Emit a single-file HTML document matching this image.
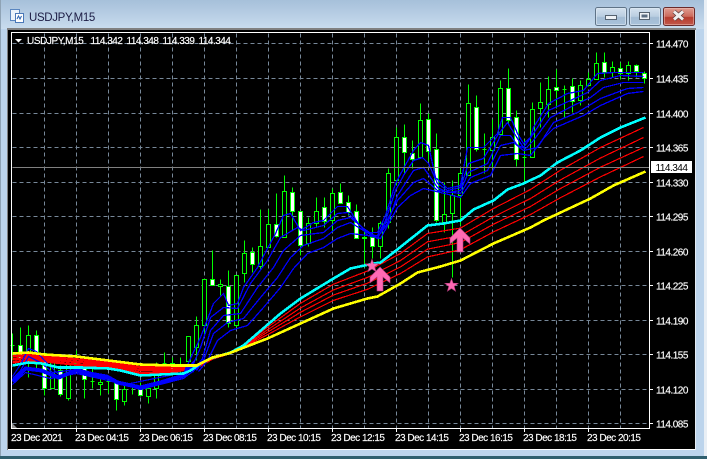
<!DOCTYPE html>
<html><head><meta charset="utf-8"><title>USDJPY,M15</title>
<style>
html,body{margin:0;padding:0;width:707px;height:459px;overflow:hidden;background:#fff}
svg{display:block}
text{font-family:"Liberation Sans",sans-serif;font-size:10px;fill:#fff;letter-spacing:-.5px;stroke:#fff;stroke-width:.15px}
</style></head><body>
<svg width="707" height="459" viewBox="0 0 707 459" xmlns="http://www.w3.org/2000/svg">
<defs>
<linearGradient id="t" x1="0" y1="0" x2="0" y2="1"><stop offset="0" stop-color="#a6c0da"/><stop offset="1" stop-color="#c9dcee"/></linearGradient>
<linearGradient id="b" x1="0" y1="0" x2="0" y2="1"><stop offset="0" stop-color="#d6e3f0"/><stop offset=".5" stop-color="#b9cde0"/><stop offset=".55" stop-color="#a3bcd4"/><stop offset="1" stop-color="#a9c2da"/></linearGradient>
<linearGradient id="c" x1="0" y1="0" x2="0" y2="1"><stop offset="0" stop-color="#e0a094"/><stop offset=".5" stop-color="#cc6a5c"/><stop offset=".55" stop-color="#b63c2e"/><stop offset="1" stop-color="#c25a4c"/></linearGradient>
</defs>
<rect width="707" height="459" fill="#bcd4ec"/>
<rect width="707" height="29" fill="url(#t)"/>
<rect x="0" y="0" width="1" height="459" fill="#8fa3b5"/>
<rect x="704" y="0" width="3" height="459" fill="#e9eff5"/>
<rect x="0" y="456" width="707" height="3" fill="#2f5f6e"/>

<!-- title icon -->
<rect x="10.5" y="9.5" width="9" height="11" fill="#eaf2fb" stroke="#5a86c0"/>
<rect x="15.5" y="13.5" width="8" height="9" fill="#fff" stroke="#4a78b8"/>
<path d="M17 19l1.5-3 1.5 3 1.5-3" fill="none" stroke="#2a62b0"/>
<text x="29" y="21" style="font-size:11.5px;letter-spacing:-.35px;fill:#1c1c44;stroke:none">USDJPY,M15</text>

<!-- buttons -->
<rect x="595.5" y="7.5" width="31" height="18" rx="2" fill="url(#b)" stroke="#5f7387"/>
<rect x="596.5" y="8.5" width="29" height="16" rx="1" fill="none" stroke="#dfe9f3" stroke-opacity=".6"/>
<rect x="605.5" y="15.5" width="11" height="4" fill="#eef2f6" stroke="#55626f"/>
<rect x="629.5" y="7.5" width="31" height="18" rx="2" fill="url(#b)" stroke="#5f7387"/>
<rect x="630.5" y="8.5" width="29" height="16" rx="1" fill="none" stroke="#dfe9f3" stroke-opacity=".6"/>
<rect x="639.5" y="12.5" width="10" height="7" fill="#eef2f6" stroke="#55626f"/>
<rect x="641.5" y="14.5" width="6" height="3" fill="#5a6c80"/>
<rect x="663.5" y="7.5" width="31" height="18" rx="2" fill="url(#c)" stroke="#6a2a2a"/>
<rect x="664.5" y="8.5" width="29" height="16" rx="1" fill="none" stroke="#efc4bc" stroke-opacity=".5"/>
<path d="M674 11.5l9 8M683 11.5l-9 8" fill="none" stroke="#5a3a3a" stroke-width="4.4"/>
<path d="M674 11.5l9 8M683 11.5l-9 8" fill="none" stroke="#f0eeee" stroke-width="3"/>

<!-- chart frame -->
<rect x="7" y="28" width="689" height="2" fill="#808080"/>
<rect x="7" y="28" width="1" height="422" fill="#808080"/>
<rect x="8" y="30" width="688" height="419" fill="#000"/>
<rect x="8" y="449" width="688" height="1" fill="#fff"/>
<rect x="695" y="30" width="1" height="420" fill="#e4ecf4"/>

<g transform="translate(.5,.5)" shape-rendering="crispEdges" fill="none">
<!-- grid -->
<path stroke="#778899" stroke-dasharray="4 3" d="M44 33V428M76 33V428M108 33V428M140 33V428M172 33V428M204 33V428M236 33V428M268 33V428M300 33V428M332 33V428M364 33V428M396 33V428M428 33V428M460 33V428M492 33V428M524 33V428M556 33V428M588 33V428M620 33V428M12 43H648M12 78H648M12 113H648M12 147H648M12 182H648M12 216H648M12 251H648M12 285H648M12 320H648M12 354H648M12 389H648M12 423H648"/>
<!-- wicks -->
<path stroke="#00ff00" d="M12 333V360M20 327V365M28 325V377M36 330V368M44 352V395M52 358V388M60 365V396M68 363V400M76 350V372M84 360V398M92 367V388M100 375V395M108 377V393M116 380V410M124 383V405M132 386V394M140 382V396M148 385V403M156 362V398M164 352V370M172 357V373M180 357V372M188 336V362M196 316V360M204 279V335M212 250V285M220 279V295M228 270V327M236 275V327M244 240V282M252 247V272M260 209V270M268 209V247M276 193V237M284 175V237M292 187V230M300 211V255M308 217V246M316 197V227M324 197V227M332 188V232M340 183V203M348 195V215M356 204V238M364 230V267M372 227V258M380 221V258M388 168V228M396 127V185M404 124V173M412 140V168M420 103V157M428 113V161M436 133V222M444 182V232M452 180V277M460 168V225M468 84V175M476 95V151M484 133V173M492 119V168M500 80V134M508 68V123M516 110V166M524 139V183M532 102V157M540 82V127M548 76V117M556 69V108M564 85V117M572 78V112M580 80V105M588 72V86M596 52V79M604 52V77M612 61V77M620 62V79M628 61V80M636 64V77M644 71V83"/>
<!-- bull bodies -->
<path stroke="#00ff00" fill="#000" d="M10 345h4M26 335h4v22h-4zM50 358h4v30h-4zM66 363h4v35h-4zM74 363h4v1h-4zM90 381h4M98 382h4v2h-4zM106 381h4M122 389h4v12h-4zM130 386h4M146 388h4v8h-4zM154 370h4v18h-4zM162 363h4M178 365h4M186 336h4v25h-4zM194 325h4v22h-4zM202 279h4v46h-4zM218 284h4v2h-4zM234 275h4v50h-4zM242 253h4v20h-4zM258 246h4v20h-4zM266 224h4v23h-4zM282 191h4v46h-4zM306 223h4v20h-4zM314 211h4v12h-4zM330 193h4v27h-4zM362 237h4v1h-4zM378 223h4v23h-4zM386 173h4v49h-4zM394 137h4v43h-4zM418 120h4v37h-4zM442 214h4v8h-4zM450 195h4v18h-4zM458 173h4v22h-4zM466 103h4v72h-4zM482 149h4M490 137h4v13h-4zM498 88h4v46h-4zM522 157h4M530 109h4v48h-4zM538 102h4v6h-4zM546 89h4v15h-4zM562 89h4M578 85h4v15h-4zM586 79h4v6h-4zM594 63h4v16h-4zM610 67h4v5h-4zM626 65h4v8h-4z"/>
<!-- bear bodies -->
<path stroke="#00ff00" fill="#fff" d="M18 345h4v13h-4zM34 335h4v19h-4zM42 353h4v35h-4zM58 370h4v24h-4zM82 367h4v12h-4zM114 382h4v17h-4zM138 387h4v8h-4zM170 363h4v7h-4zM210 279h4v6h-4zM226 286h4v37h-4zM250 252h4v12h-4zM274 224h4v12h-4zM290 192h4v19h-4zM298 211h4v34h-4zM322 207h4v14h-4zM338 192h4v11h-4zM346 202h4v10h-4zM354 211h4v27h-4zM370 237h4v9h-4zM402 137h4v15h-4zM410 153h4v6h-4zM426 119h4v32h-4zM434 149h4v71h-4zM474 107h4v42h-4zM506 88h4v32h-4zM514 117h4v42h-4zM554 87h4v3h-4zM570 86h4v15h-4zM602 62h4v10h-4zM618 68h4v5h-4zM634 65h4v6h-4zM642 73h4v5h-4z"/>
<!-- red lines left -->
<g stroke="#ff0000" stroke-width="2.5">
<polyline points="12,356 28,354.5 44,356.3 76,358.8 108,362 140,366.8 172,366.5 196,365 212,358 228,353"/>
<polyline points="12,359 28,357 44,358.5 76,361.5 108,364 140,369.5 172,369 196,366 212,358 228,353"/>
<polyline points="12,362 28,359.5 44,360.8 76,364.3 108,366 140,372.3 172,371.5 196,367 212,358 228,353"/>
</g>
<!-- red lines right -->
<g stroke="#ff0000" stroke-width="1.2">
<polyline points="228,353 243,345.4 267,326.7 300,302.8 333,283.7 367,270.5 400,253 427,233 460,227.6 493,208 530,189 560,169.7 600,147 643,127"/>
<polyline points="228,353 243,345.8 267,329.3 300,307.5 333,289.4 367,276.9 400,260 427,241.3 460,235.2 493,216.3 530,198 560,179.4 600,157.5 643,137"/>
<polyline points="228,353 243,346.1 267,331.7 300,311.8 333,294.5 367,282.7 400,266.4 427,248.7 460,242 493,223.7 530,206 560,188 600,166.7 643,147"/>
<polyline points="228,353 243,346.5 267,334.2 300,316.3 333,299.9 367,288.8 400,273 427,256.4 460,249.2 493,231.4 530,214 560,197.2 600,176.4 643,156"/>
</g>
<!-- blue -->
<g stroke="#0000ff">
<polyline stroke-width="1.2" points="12,376 20,364 28,348 36,351 44,360 52,368 60,376 76,368 91,372 108,375"/>
<polyline stroke-width="1.2" points="12,378 20,370 28,356 40,362 52,372 76,369 100,375 125,384 183,372 196,358"/>
<polyline stroke-width="1.2" points="12,384 25,372 50,378 76,373 108,380 140,389 183,378 196,368 204,358"/>
<polyline stroke-width="4" points="12,381 25,368 41,370 58,377 76,370 91,375 108,377 117,382 140,387 160,382 183,375 192,366"/>
<polyline stroke-width="1.3" points="183,373 190,358 200,337 213,303 223,293 228,305 237,303 243,287 257,267 267,248 275,233 283,215 290,213 300,230 313,222 323,220 337,206 347,206 357,222 367,232 377,232 385,215 395,183 403,168 413,150 420,142 428,145 435,177 447,188 460,185 467,147 483,147 497,133 502,117 510,117 517,133 523,143 530,137 533,127 548,103 567,93 583,90 597,73 613,72 643,72"/>
<polyline stroke-width="1.3" points="190,370 200,347 210,317 223,307 237,308 250,283 267,260 280,237 297,227 303,230 323,225 337,213 347,212 360,225 367,235 377,235 385,220 395,190 403,175 413,160 422,157 428,163 437,183 447,190 460,187 468,163 483,158 497,135 507,122 510,127 517,138 523,147 533,133 548,110 570,100 587,92 600,80 620,75 643,76"/>
<polyline stroke-width="1.3" points="192,372 202,358 210,330 223,315 240,313 257,287 273,267 283,250 300,235 323,232 337,220 350,217 363,228 377,237 387,223 397,195 413,170 423,167 437,187 447,192 460,190 468,172 487,163 500,135 510,135 517,145 525,148 533,140 550,117 573,105 590,97 603,87 623,82 643,82"/>
<polyline stroke-width="1.3" points="196,370 203,360 213,333 227,322 243,318 260,297 277,277 290,257 303,245 323,238 337,227 350,222 363,230 377,238 397,200 413,182 423,178 437,190 460,193 470,177 487,170 500,145 513,142 523,150 537,147 553,122 577,112 600,98 627,88 643,87"/>
<polyline stroke-width="1.3" points="198,371 207,360 217,340 230,330 247,325 263,307 280,287 293,268 307,253 323,247 337,238 350,233 367,235 380,238 397,207 410,195 423,188 440,192 460,197 470,183 490,175 500,155 517,153 530,155 543,138 553,128 583,115 600,105 627,93 643,91"/>
</g>
<polyline stroke="#00ffff" stroke-width="2.6" points="12,365 28,362 41,363 58,367 81,367 108,368 120,370 140,375 160,374 183,373 190,370 200,363 210,358 230,352 243,345 280,313 300,298 333,278 350,268 373,263 380,262 393,252 427,225 443,223 460,220 473,209 493,200 507,189 523,183 540,175 557,162 580,150 600,137 620,127 645,117"/>
<polyline stroke="#ffff00" stroke-width="2.6" points="12,353 28,352 44,354 76,356 108,360 140,364 172,365 196,365 204,361 212,357 228,353 267,338 300,323 333,308 367,298 377,296 400,283 417,272 440,266 460,260 493,243 530,227 543,220 590,198 613,185 645,171"/>
<!-- current price line -->
<path stroke="#808080" d="M12 167H649"/>
</g>

<!-- markers -->
<g fill="#ff69b4" stroke="#b03a7a" stroke-width=".6">
<polygon transform="translate(372,266)" points="0,-7 1.65,-2.27 6.66,-2.16 2.67,.87 4.11,5.66 0,3 -4.11,5.66 -2.67,.87 -6.66,-2.16 -1.65,-2.27"/>
<polygon transform="translate(451.5,285.5)" points="0,-7 1.65,-2.27 6.66,-2.16 2.67,.87 4.11,5.66 0,3 -4.11,5.66 -2.67,.87 -6.66,-2.16 -1.65,-2.27"/>
<polygon points="380,267 390,277 390,283 383,277 383,291 377,291 377,277 370,283 370,277"/>
<polygon points="460,228 470,238 470,244 463,238 463,252 457,252 457,238 450,244 450,238"/>
</g>

<!-- plot border -->
<g shape-rendering="crispEdges" fill="#fff">
<rect x="11" y="32" width="639" height="1"/>
<rect x="11" y="32" width="1" height="397"/>
<rect x="11" y="428" width="639" height="1"/>
<rect x="649" y="32" width="1" height="397"/>
<path d="M650 43h3v1h-3zM650 78h3v1h-3zM650 113h3v1h-3zM650 147h3v1h-3zM650 182h3v1h-3zM650 216h3v1h-3zM650 251h3v1h-3zM650 285h3v1h-3zM650 320h3v1h-3zM650 354h3v1h-3zM650 389h3v1h-3zM650 423h3v1h-3zM76 429h1v3h-1zM140 429h1v3h-1zM204 429h1v3h-1zM268 429h1v3h-1zM332 429h1v3h-1zM396 429h1v3h-1zM460 429h1v3h-1zM524 429h1v3h-1zM588 429h1v3h-1z"/>
</g>
<polygon points="12,423 17,428 12,428" fill="#909090"/>
<polygon points="15,39 22,39 18.5,42.5" fill="#fff"/>

<!-- header text -->
<text x="27" y="44" style="letter-spacing:-.4px">USDJPY,M15</text>
<text x="90.5" y="44">114.342</text>
<text x="126.5" y="44">114.348</text>
<text x="162.5" y="44">114.339</text>
<text x="198.5" y="44">114.344</text>

<!-- price axis -->
<text x="656" y="47.5">114.470</text>
<text x="656" y="82.5">114.435</text>
<text x="656" y="117.5">114.400</text>
<text x="656" y="151.5">114.365</text>
<text x="656" y="186.5">114.330</text>
<text x="656" y="220.5">114.295</text>
<text x="656" y="255.5">114.260</text>
<text x="656" y="289.5">114.225</text>
<text x="656" y="324.5">114.190</text>
<text x="656" y="358.5">114.155</text>
<text x="656" y="393.5">114.120</text>
<text x="656" y="427.5">114.085</text>
<rect x="651" y="161" width="41" height="12" fill="#fff"/>
<text x="655.5" y="171" style="fill:#000;stroke:none">114.344</text>

<!-- time axis -->
<text x="11" y="441">23 Dec 2021</text>
<text x="75" y="441">23 Dec 04:15</text>
<text x="139" y="441">23 Dec 06:15</text>
<text x="203" y="441">23 Dec 08:15</text>
<text x="267" y="441">23 Dec 10:15</text>
<text x="331" y="441">23 Dec 12:15</text>
<text x="395" y="441">23 Dec 14:15</text>
<text x="459" y="441">23 Dec 16:15</text>
<text x="523" y="441">23 Dec 18:15</text>
<text x="587" y="441">23 Dec 20:15</text>
</svg>
</body></html>
